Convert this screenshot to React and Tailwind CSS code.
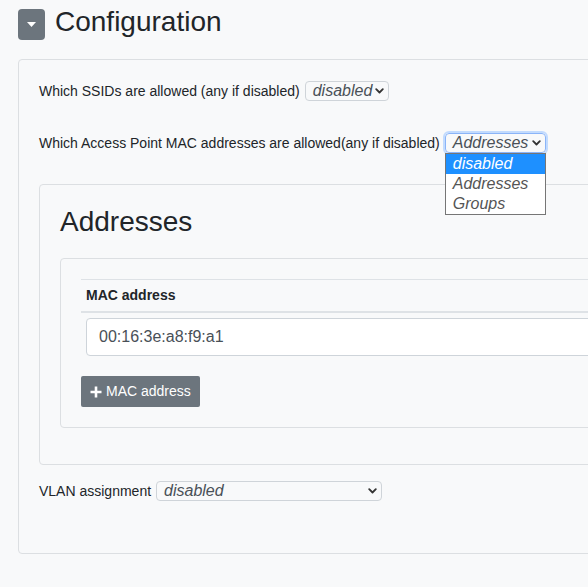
import React from 'react';

const Chevron = () => (
  <svg width="9" height="6" viewBox="0 0 9 6" className="shrink-0">
    <path d="M1.2 1.2 L4.5 4.5 L7.8 1.2" fill="none" stroke="#333" strokeWidth="1.8" strokeLinecap="round" strokeLinejoin="round" />
  </svg>
);

const FakeSelect = ({ value, width, focused }) => (
  <div
    className={`flex h-[20px] items-center justify-between rounded-[4px] border bg-[#f8f9fa] pl-[7px] pr-[4px] text-[16px] italic leading-none text-[#495057] ${
      focused ? 'border-[#8ab4f8] outline-2 outline-[#c2dbfe]' : 'border-[#cfd4d9]'
    } ${width}`}
  >
    <span>{value}</span>
    <Chevron />
  </div>
);

const App = () => {
  return (
    <div className="h-[587px] w-[588px] overflow-hidden bg-[#f8f9fa] pt-[9px] pl-[18px] font-['Liberation_Sans',Arial,sans-serif] text-[#212529]">
      {/* Header */}
      <div className="flex h-[31px] items-center gap-[10px]">
        <button className="flex h-[31px] w-[27px] items-center justify-center rounded-[4px] bg-[#6c757d]">
          <svg width="9" height="5" viewBox="0 0 9 5">
            <path d="M0 0 L9 0 L4.5 5 Z" fill="#fff" />
          </svg>
        </button>
        <h3 className="mb-[6px] text-[28px] leading-none">Configuration</h3>
      </div>

      {/* Outer card */}
      <div className="mt-[19px] w-[800px] rounded-[4px] border border-[#dcdfe2] px-[20px] pt-[21px] pb-[52px]">
        <div className="flex items-center gap-[5px] text-[14px] leading-[20px]">
          <span>Which SSIDs are allowed (any if disabled)</span>
          <FakeSelect value="disabled" width="w-[84px]" />
        </div>

        <div className="mt-[32px] flex items-center gap-[5px] text-[14px] leading-[20px]">
          <span>Which Access Point MAC addresses are allowed(any if disabled)</span>
          <div className="relative">
            <FakeSelect value="Addresses" width="w-[101px]" focused />
            <div className="absolute top-[20px] left-0 z-10 w-[101px] border border-[#767676] bg-white text-[16px] italic leading-[20px] text-[#555]">
              <div className="bg-[#1e90ff] pl-[7px] text-white">disabled</div>
              <div className="pl-[7px]">Addresses</div>
              <div className="pl-[7px]">Groups</div>
            </div>
          </div>
        </div>

        {/* Addresses card */}
        <div className="mt-[31px] rounded-[4px] border border-[#dcdfe2] p-[20px]">
          <h3 className="text-[28px] leading-[34px]">Addresses</h3>

          <div className="mt-[19px] mb-[16px] rounded-[4px] border border-[#dcdfe2] p-[20px]">
            <div className="border-t border-[#dee2e6]">
              <div className="flex h-[33px] items-center border-b-2 border-[#dee2e6] px-[5px] text-[14px] font-bold">
                MAC address
              </div>
              <div className="p-[5px]">
                <div className="flex h-[38px] items-center rounded-[4px] border border-[#ced4da] bg-white px-[12px] text-[16px] text-[#495057]">
                  00:16:3e:a8:f9:a1
                </div>
              </div>
            </div>
            <button className="mt-[15px] flex h-[31px] items-center gap-[4px] rounded-[2px] bg-[#6c757d] px-[9px] text-[14px] text-white">
              <svg width="12" height="12" viewBox="0 0 12 12">
                <path d="M6 0.5 V11.5 M0.5 6 H11.5" stroke="#fff" strokeWidth="2.6" />
              </svg>
              MAC address
            </button>
          </div>
        </div>

        <div className="mt-[16px] flex items-center gap-[5px] text-[14px] leading-[20px]">
          <span>VLAN assignment</span>
          <FakeSelect value="disabled" width="w-[226px]" />
        </div>
      </div>
    </div>
  );
};

export default App;
